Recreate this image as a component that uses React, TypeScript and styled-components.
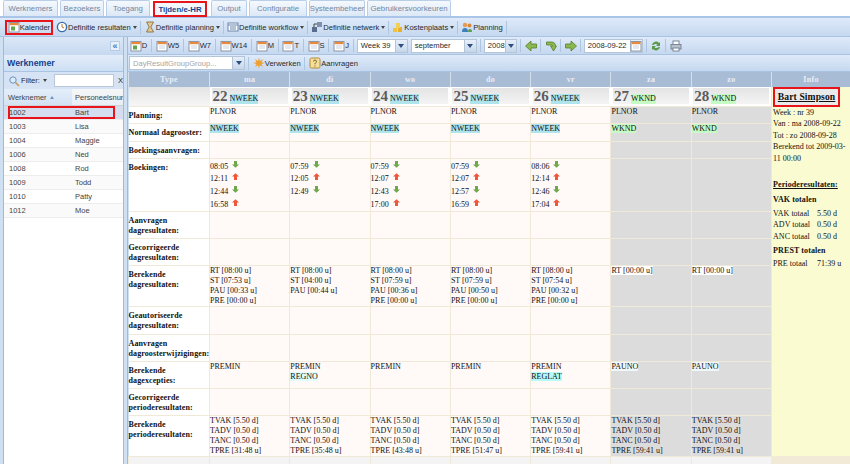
import React from 'react';
import styled, { createGlobalStyle } from 'styled-components';

const GlobalStyle = createGlobalStyle`
  html, body { margin: 0; padding: 0; background: #fff; overflow: hidden; }
  body { font-family: "Liberation Sans", Arial, sans-serif; font-size: 7.6px; color: #2a2a2a; }
  * { box-sizing: border-box; }
`;

const Page = styled.div`
  width: 850px;
  height: 464px;
  overflow: hidden;
  display: flex;
  flex-direction: column;
  background: #cfe0f3;
`;

const TabStrip = styled.div`
  height: 18px;
  flex: none;
  display: flex;
  gap: 2px;
  padding-left: 3px;
  background: #fff;
  border-bottom: 2px solid #a9c6e8;
`;

const Tab = styled.div<{ $active?: boolean; $w: number }>`
  width: ${p => p.$w}px;
  height: 16px;
  margin: ${p => (p.$active ? '1px 2px 0 1px' : '0')};
  display: flex;
  align-items: center;
  justify-content: center;
  white-space: nowrap;
  font-size: 7.8px;
  font-weight: ${p => (p.$active ? 700 : 400)};
  color: ${p => (p.$active ? '#15428b' : '#74879d')};
  background: ${p => (p.$active ? '#f2f7fd' : 'linear-gradient(#f5f9fe, #dce8f6)')};
  border: ${p => (p.$active ? '2px solid #e8141c' : '1px solid #b9cfe8')};
  border-bottom: ${p => (p.$active ? '2px solid #e8141c' : 'none')};
  border-radius: ${p => (p.$active ? '0' : '2px 2px 0 0')};
`;

const Toolbar = styled.div<{ $h: number; $pad: number; $gap: number }>`
  height: ${p => p.$h}px;
  flex: none;
  display: flex;
  align-items: center;
  gap: ${p => p.$gap}px;
  padding-left: ${p => p.$pad}px;
  background: linear-gradient(#dfeafa, #c5d8ef);
  border-bottom: 1px solid #a9c3e3;
  white-space: nowrap;
`;

const ToolButton = styled.div<{ $marked?: boolean }>`
  display: flex;
  align-items: center;
  height: 15px;
  padding: 0 0.75px;
  font-size: 7.6px;
  color: #2a2a2a;
  border: ${p => (p.$marked ? '2px solid #e8141c' : 'none')};
`;

const MainGroup = styled(ToolButton)`
  padding: 0 1px;
`;

const Caret = styled.span`
  width: 0;
  height: 0;
  margin-left: 2px;
  border: 2px solid transparent;
  border-top: 3px solid #444;
  border-bottom: none;
`;

const Sep = styled.span`
  width: 1px;
  height: 13px;
  background: #aec5e0;
  flex: none;
`;

const Body = styled.div`
  flex: 1;
  min-height: 0;
  display: flex;
`;

const Sidebar = styled.div`
  width: 121px;
  flex: none;
  display: flex;
  flex-direction: column;
  margin-left: 3px;
  border-left: 1px solid #99bbe8;
  border-right: 1px solid #99bbe8;
  background: #fff;
`;

const CollapseBar = styled.div`
  height: 18px;
  display: flex;
  align-items: center;
  justify-content: flex-end;
  padding-right: 3px;
  background: linear-gradient(#dbe7f7, #c6d9f0);
  color: #4a78b0;
  font-size: 9px;
  font-weight: 700;
`;

const CollapseButton = styled.span`
  width: 10px;
  height: 10px;
  display: flex;
  align-items: center;
  justify-content: center;
  background: #e8f0fa;
  border: 1px solid #b5cbe6;
  line-height: 1;
`;

const PanelTitle = styled.div`
  height: 17px;
  display: flex;
  align-items: center;
  padding-left: 3px;
  font-weight: 700;
  font-size: 8.8px;
  color: #15428b;
  background: linear-gradient(#e4edf9, #cddff4);
  border-bottom: 1px solid #a9c3e3;
`;

const FilterBar = styled.div`
  height: 17px;
  display: flex;
  align-items: center;
  gap: 1px;
  padding-left: 4px;
  font-size: 7.6px;
  background: #d5e3f5;
`;

const FilterInput = styled.span`
  width: 66px;
  height: 13px;
  margin: 0 3px 0 6px;
  background: #fff;
  border: 1px solid #b8c8da;
`;

const GridHead = styled.div`
  height: 17px;
  display: grid;
  grid-template-columns: 68px 1fr;
  font-size: 7.5px;
  color: #444;
  overflow: hidden;
  border-bottom: 1px solid #d0d0d0;
  background: linear-gradient(#f6f6f6, #e8eef6);
`;

const GridHeadCell = styled.div<{ $sorted?: boolean }>`
  display: flex;
  align-items: center;
  gap: 3px;
  padding-left: ${p => (p.$sorted ? 4 : 3)}px;
  white-space: nowrap;
  overflow: hidden;
  background: ${p => (p.$sorted ? 'linear-gradient(#e4eefa, #d3e2f4)' : 'transparent')};
`;

const SortArrow = styled.span`
  width: 0;
  height: 0;
  border: 2.5px solid transparent;
  border-bottom: 3px solid #6f94c4;
  border-top: none;
`;

const GridRow = styled.div<{ $selected?: boolean; $odd?: boolean }>`
  position: relative;
  height: 14px;
  display: grid;
  grid-template-columns: 66px 1fr;
  align-items: center;
  font-size: 7.5px;
  color: #444;
  padding-left: 5px;
  background: ${p => (p.$selected ? '#d4deee' : p.$odd ? '#fafafa' : '#fff')};
  border-bottom: 1px solid #ededed;
`;

const SelectionMark = styled.span`
  position: absolute;
  left: 4px;
  top: 0;
  width: 107px;
  height: 13px;
  border: 2px solid #e8141c;
`;

const Splitter = styled.div`
  width: 3px;
  flex: none;
  background: #cfe0f3;
`;

const Content = styled.div`
  flex: 1;
  min-width: 0;
  display: flex;
  flex-direction: column;
  border-left: 1px solid #99bbe8;
`;

const Combo = styled.div<{ $w: number; $grey?: boolean }>`
  width: ${p => p.$w}px;
  height: 14px;
  flex: none;
  display: flex;
  align-items: center;
  justify-content: space-between;
  padding-left: 3px;
  font-size: 7.6px;
  color: ${p => (p.$grey ? '#a5a5a5' : '#2a2a2a')};
  background: #fff;
  border: 1px solid #b5c5d8;
`;

const ComboArrow = styled.span`
  width: 12px;
  height: 100%;
  display: flex;
  align-items: center;
  justify-content: center;
  background: linear-gradient(#e7eff9, #c6d7ec);
  border-left: 1px solid #b5c5d8;
`;

const ComboCaret = styled.span`
  width: 0;
  height: 0;
  border: 3px solid transparent;
  border-top: 4px solid #2d4f7f;
  border-bottom: none;
`;

const Sheet = styled.table`
  flex: 1;
  width: 722px;
  table-layout: fixed;
  border-collapse: collapse;
  font-family: "Liberation Serif", "Times New Roman", serif;
  font-size: 8px;
  line-height: 10px;
  color: #111;
`;

const HeadCell = styled.th`
  height: 15px;
  padding: 0;
  font-size: 8px;
  letter-spacing: 0.3px;
  font-weight: 700;
  color: #e8eef6;
  background: #a9bcd6;
  border-left: 1px solid #d6e0ec;
  text-align: center;
`;

const DateCell = styled.td<{ $blank?: boolean }>`
  height: 19px;
  padding: 1px 2px;
  background: ${p => (p.$blank ? 'linear-gradient(#e4e4e4, #f6f6f6)' : '#fff')};
  border-bottom: 1px solid #f1e9d8;
`;

const DateBox = styled.div`
  height: 16px;
  display: flex;
  align-items: baseline;
  gap: 2px;
  padding: 3px 0 0 1px;
  background: linear-gradient(#e4e4e4, #f4f4f4);
`;

const DateNumber = styled.span`
  font-size: 15px;
  font-weight: 700;
  color: #5c5c5c;
`;

const TypeCell = styled.td`
  padding: 4px 0 0 0;
  vertical-align: top;
  font-weight: 700;
  white-space: nowrap;
  line-height: 10px;
  letter-spacing: 0.1px;
  background: #fff;
  border: 1px solid #f1e9d8;
  border-left: none;
`;

const DayCell = styled.td<{ $weekend?: boolean }>`
  padding: 0;
  vertical-align: top;
  background: ${p => (p.$weekend ? '#dcdcdc' : '#fff9f8')};
  border: 1px solid #f1e9d8;
`;

const Line = styled.div`
  height: 10px;
  white-space: nowrap;
`;

const Chip = styled.span<{ $color: string }>`
  background: ${p => p.$color};
`;

const ClockList = styled.div`
  padding-top: 2px;
`;

const ClockLine = styled.div`
  height: 12.6px;
  display: flex;
  align-items: center;
  gap: 4px;

  svg {
    margin-bottom: 5px;
  }
`;

const InfoCell = styled.td`
  padding: 0 1px;
  vertical-align: top;
  background: #fbfbd2;
  border-left: 1px solid #f1e9d8;
  line-height: 11.4px;
  font-size: 8px;
`;

const InfoName = styled.div`
  width: 67px;
  height: 20px;
  display: flex;
  align-items: center;
  justify-content: center;
  font-size: 9.6px;
  font-weight: 700;
  letter-spacing: 0.1px;
  white-space: nowrap;
  text-decoration: underline;
  color: #111;
  background: #eaeaea;
  border: 2px solid #e8141c;
`;

const InfoHeading = styled.div<{ $gap: number; $under?: boolean }>`
  margin-top: ${p => p.$gap}px;
  margin-bottom: 2px;
  font-weight: 700;
  letter-spacing: 0.1px;
  text-decoration: ${p => (p.$under ? 'underline' : 'none')};
`;

const InfoTotals = styled.div`
  display: grid;
  grid-template-columns: 44px 1fr;
`;

const FootCell = styled.td<{ $info?: boolean }>`
  height: 9px;
  padding: 0;
  background: ${p => (p.$info ? '#f2ead6' : '#f4f4f4')};
  border-left: 1px solid #f1e9d8;
`;

const Ico = ({ children, w = 12 }: { children: React.ReactNode; w?: number }) => (
  <svg width={w} height={12} viewBox="0 0 12 12" style={{ flex: 'none' }}>{children}</svg>
);

const CalendarIcon = ({ green }: { green?: boolean }) => (
  <Ico>
    <rect x="1" y="1.5" width="10" height="9.5" fill="#fff" stroke="#8b96a8" />
    <rect x="1.5" y="2" width="9" height="2.2" fill="#e88a3c" />
    {green && <rect x="3" y="5.5" width="4" height="4" fill="#5ea84a" />}
    {!green && <path d="M3 6h6M3 8h6" stroke="#c9d3e0" />}
  </Ico>
);

const ArrowUp = () => (
  <svg width="7" height="7" viewBox="0 0 7 7">
    <path d="M3.5 0.3 7 3.6H5V7H2V3.6H0z" fill="#f0563a" />
  </svg>
);

const ArrowDown = () => (
  <svg width="7" height="7" viewBox="0 0 7 7">
    <path d="M3.5 6.7 7 3.4H5V0H2v3.4H0z" fill="#6fa84a" />
  </svg>
);

const GreenArrow = ({ flip }: { flip?: boolean }) => (
  <Ico w={13}>
    <path
      d={flip ? 'M12 6 6.5 1v3H1v4h5.5v3z' : 'M1 6 6.5 1v3H12v4H6.5v3z'}
      fill="#8ab84e"
      stroke="#557f2c"
      strokeWidth="0.8"
    />
  </Ico>
);

const tabs: [string, number, boolean?][] = [
  ['Werknemers', 55],
  ['Bezoekers', 44],
  ['Toegang', 44],
  ['Tijden/e-HR', 54, true],
  ['Output', 36],
  ['Configuratie', 58],
  ['Systeembeheer', 56],
  ['Gebruikersvoorkeuren', 84],
];

const people = [
  ['1002', 'Bart'], ['1003', 'Lisa'], ['1004', 'Maggie'], ['1006', 'Ned'],
  ['1008', 'Rod'], ['1009', 'Todd'], ['1010', 'Patty'], ['1012', 'Moe'],
];

type Day = {
  name: string; nr: number; code: string; clock: [string, boolean][];
  result: string[]; exc: string[]; period: string;
};

const mkClock = (t: string[]): [string, boolean][] => t.map((x, i) => [x, i % 2 === 1]);

const days: Day[] = [
  { name: 'ma', nr: 22, code: 'NWEEK', clock: mkClock(['08:05', '12:11', '12:44', '16:58']), result: ['RT [08:00 u]', 'ST [07:53 u]', 'PAU [00:33 u]', 'PRE [00:00 u]'], exc: ['PREMIN'], period: '31:48' },
  { name: 'di', nr: 23, code: 'NWEEK', clock: mkClock(['07:59', '12:05', '12:49']), result: ['RT [08:00 u]', 'ST [04:00 u]', 'PAU [00:44 u]'], exc: ['PREMIN', 'REGNO'], period: '35:48' },
  { name: 'wo', nr: 24, code: 'NWEEK', clock: mkClock(['07:59', '12:07', '12:43', '17:00']), result: ['RT [08:00 u]', 'ST [07:59 u]', 'PAU [00:36 u]', 'PRE [00:00 u]'], exc: ['PREMIN'], period: '43:48' },
  { name: 'do', nr: 25, code: 'NWEEK', clock: mkClock(['07:59', '12:07', '12:57', '16:59']), result: ['RT [08:00 u]', 'ST [07:59 u]', 'PAU [00:50 u]', 'PRE [00:00 u]'], exc: ['PREMIN'], period: '51:47' },
  { name: 'vr', nr: 26, code: 'NWEEK', clock: mkClock(['08:06', '12:14', '12:46', '17:04']), result: ['RT [08:00 u]', 'ST [07:54 u]', 'PAU [00:32 u]', 'PRE [00:00 u]'], exc: ['PREMIN', 'REGLAT'], period: '59:41' },
  { name: 'za', nr: 27, code: 'WKND', clock: [], result: ['RT [00:00 u]'], exc: ['PAUNO'], period: '59:41' },
  { name: 'zo', nr: 28, code: 'WKND', clock: [], result: ['RT [00:00 u]'], exc: ['PAUNO'], period: '59:41' },
];

const isWeekend = (d: Day) => d.code === 'WKND';
const chipColor = (c: string) => (c === 'WKND' ? '#c6fbc6' : '#b0e4ec');

const excColor = (c: string) => {
  if (c === 'REGLAT') return '#b6fbfb';
  if (c === 'REGNO') return '#e2fbfb';
  if (c === 'PAUNO') return '#eef8fb';
  return 'transparent';
};

type RowDef = { label: string[]; h: number; cell?: (d: Day) => React.ReactNode };

const rows: RowDef[] = [
  { label: ['Planning:'], h: 17, cell: () => <Line>PLNOR</Line> },
  { label: ['Normaal dagrooster:'], h: 18, cell: d => <Line><Chip $color={chipColor(d.code)}>{d.code}</Chip></Line> },
  { label: ['Boekingsaanvragen:'], h: 17 },
  {
    label: ['Boekingen:'], h: 52,
    cell: d => (
      <ClockList>
        {d.clock.map(([t, out]) => (
          <ClockLine key={t}>{t}{out ? <ArrowUp /> : <ArrowDown />}</ClockLine>
        ))}
      </ClockList>
    ),
  },
  { label: ['Aanvragen', 'dagresultaten:'], h: 27 },
  { label: ['Gecorrigeerde', 'dagresultaten:'], h: 27 },
  {
    label: ['Berekende', 'dagresultaten:'], h: 41,
    cell: d => d.result.map(r => (
      <Line key={r}>{isWeekend(d) ? <Chip $color="#fff">{r}</Chip> : r}</Line>
    )),
  },
  { label: ['Geautoriseerde', 'dagresultaten:'], h: 28 },
  { label: ['Aanvragen', 'dagroosterwijzigingen:'], h: 27 },
  {
    label: ['Berekende', 'dagexcepties:'], h: 27,
    cell: d => d.exc.map(e => <Line key={e}><Chip $color={excColor(e)}>{e}</Chip></Line>),
  },
  { label: ['Gecorrigeerde', 'perioderesultaten:'], h: 27 },
  {
    label: ['Berekende', 'perioderesultaten:'], h: 41,
    cell: d => (
      <>
        <Line>TVAK [5.50 d]</Line>
        <Line>TADV [0.50 d]</Line>
        <Line>TANC [0.50 d]</Line>
        <Line>TPRE [{d.period} u]</Line>
      </>
    ),
  },
];

const viewButtons = ['W5', 'W7', 'W14', 'M', 'T', 'S', 'J'];

const App = () => (
  <Page>
    <GlobalStyle />
    <TabStrip>
      {tabs.map(([t, w, active]) => <Tab key={t} $w={w} $active={active}>{t}</Tab>)}
    </TabStrip>

    <Toolbar $h={19} $pad={5} $gap={2}>
      <ToolButton $marked><CalendarIcon green />Kalender</ToolButton>
      <MainGroup>
        <Ico><circle cx="6" cy="6" r="4.6" fill="#fff" stroke="#3a6ea8" strokeWidth="1.4" /><path d="M6 3v3l2 1" stroke="#c0722a" fill="none" /></Ico>
        Definitie resultaten<Caret />
      </MainGroup>
      <Sep />
      <MainGroup>
        <Ico><path d="M2.5 1h7L6.8 6l2.700 5h-7l2.700-5z" fill="#e7c98f" stroke="#8c7a55" /></Ico>
        Definitie planning<Caret />
      </MainGroup>
      <Sep />
      <MainGroup>
        <Ico><rect x="1" y="2" width="10" height="8" fill="#fff" stroke="#6a86ad" /><path d="M1 4h10M3 6h6M3 8h6" stroke="#6a86ad" /></Ico>
        Definitie workflow<Caret />
      </MainGroup>
      <Sep />
      <MainGroup>
        <Ico><rect x="1" y="6" width="5" height="5" fill="#5a6d8c" /><rect x="6" y="1" width="5" height="5" fill="#7d90ad" /><path d="M3 6V3h3" stroke="#444" fill="none" /></Ico>
        Definitie netwerk<Caret />
      </MainGroup>
      <Sep />
      <MainGroup>
        <Ico><rect x="1" y="7" width="4" height="4" fill="#f0c040" /><rect x="6" y="6" width="4" height="5" fill="#e8b030" /><rect x="4" y="2" width="4" height="5" fill="#f4d050" /></Ico>
        Kostenplaats<Caret />
      </MainGroup>
      <Sep />
      <MainGroup>
        <Ico><circle cx="4" cy="4" r="2.2" fill="#e89a50" /><circle cx="8.5" cy="4.5" r="2" fill="#d88a40" /><path d="M1 11c0-3 1-4 3-4s3 1 3 4z" fill="#3f7fc0" /><path d="M7 11c0-2 .5-3 2-3s2 1 2 3z" fill="#5aa050" /></Ico>
        Planning
      </MainGroup>
      <Sep />
    </Toolbar>

    <Body>
      <Sidebar>
        <CollapseBar><CollapseButton>«</CollapseButton></CollapseBar>
        <PanelTitle>Werknemer</PanelTitle>
        <FilterBar>
          <Ico><circle cx="5" cy="5" r="3.2" fill="#dcebf8" stroke="#6b94c0" /><path d="M7.5 7.5 11 11" stroke="#c49a5a" strokeWidth="1.6" /></Ico>
          Filter:<Caret />
          <FilterInput />
          <span>X</span>
        </FilterBar>
        <GridHead>
          <GridHeadCell $sorted>Werknemer<SortArrow /></GridHeadCell>
          <GridHeadCell>Personeelsnun</GridHeadCell>
        </GridHead>
        {people.map(([nr, name], i) => (
          <GridRow key={nr} $selected={i === 0} $odd={i % 2 === 1}>
            <span>{nr}</span>
            <span>{name}</span>
            {i === 0 && <SelectionMark />}
          </GridRow>
        ))}
      </Sidebar>
      <Splitter />
      <Content>
        <Toolbar $h={18} $pad={1} $gap={3}>
          <ToolButton><CalendarIcon green />D</ToolButton>
          <Sep />
          {viewButtons.map(v => (
            <React.Fragment key={v}>
              <ToolButton><CalendarIcon />{v}</ToolButton>
              <Sep />
            </React.Fragment>
          ))}
          <Combo $w={51}>Week 39<ComboArrow><ComboCaret /></ComboArrow></Combo>
          <Combo $w={66}>september<ComboArrow><ComboCaret /></ComboArrow></Combo>
          <Sep />
          <Combo $w={33}>2008<ComboArrow><ComboCaret /></ComboArrow></Combo>
          <Sep />
          <GreenArrow />
          <Sep />
          <Ico w={13}><path d="M2 2h5c3 0 4 2 4 4l1 0-3 5-3-5h2c0-1-1-1-2-1H2z" fill="#8ab84e" stroke="#557f2c" strokeWidth="0.8" /></Ico>
          <Sep />
          <GreenArrow flip />
          <Sep />
          <Combo $w={59}>2008-09-22<ComboArrow><CalendarIcon /></ComboArrow></Combo>
          <Sep />
          <Ico><path d="M2 5a4 4 0 0 1 7-2l1-1v4H6l1.500-1.200A2.500 2.500 0 0 0 3.500 5zM10 7a4 4 0 0 1-7 2l-1 1V6h4L4.500 7.200A2.500 2.500 0 0 0 8.500 7z" fill="#5a9a4a" /></Ico>
          <Sep />
          <Ico w={14}><rect x="3" y="1" width="6" height="4" fill="#fff" stroke="#7a8698" /><rect x="1" y="4.500" width="10" height="4.500" fill="#b7c0cc" stroke="#7a8698" /><rect x="3" y="8" width="6" height="3" fill="#fff" stroke="#7a8698" /></Ico>
        </Toolbar>
        <Toolbar $h={17} $pad={1} $gap={3}>
          <Combo $w={116} $grey>DayResultGroupGroup...<ComboArrow><ComboCaret /></ComboArrow></Combo>
          <Sep />
          <ToolButton>
            <Ico><path d="M6 0.500 7 4l3-2-1.500 3.200L12 6 8.500 7l1.500 3-3-1.800L6 11.500 5 8.200 2 10l1.500-3L0 6l3.500-.800L2 2l3 2z" fill="#f0a030" /></Ico>
            Verwerken
          </ToolButton>
          <Sep />
          <ToolButton>
            <Ico><rect x="1" y="1" width="10" height="10" rx="1.500" fill="#f6df9a" stroke="#b08a3a" /><path d="M4.500 4.500a1.500 1.500 0 1 1 2 1.500c-.5.2-.5.6-.5 1.300M6 8.500v1" stroke="#7a5a20" fill="none" /></Ico>
            Aanvragen
          </ToolButton>
        </Toolbar>
        <Sheet>
          <colgroup>
            <col style={{ width: 81 }} />
            {days.map(d => <col key={d.nr} style={{ width: 80.300 }} />)}
            <col />
          </colgroup>
          <thead>
            <tr>
              <HeadCell>Type</HeadCell>
              {days.map(d => <HeadCell key={d.nr}>{d.name}</HeadCell>)}
              <HeadCell>Info</HeadCell>
            </tr>
          </thead>
          <tbody>
            <tr>
              <DateCell $blank />
              {days.map(d => (
                <DateCell key={d.nr}>
                  <DateBox>
                    <DateNumber>{d.nr}</DateNumber>
                    <Chip $color={chipColor(d.code)}>{d.code}</Chip>
                  </DateBox>
                </DateCell>
              ))}
              <InfoCell rowSpan={rows.length + 1}>
                <InfoName>Bart Simpson</InfoName>
                <div>Week : nr 39</div>
                <div>Van : ma 2008-09-22</div>
                <div>Tot : zo 2008-09-28</div>
                <div>Berekend tot 2009-03-11 00:00</div>
                <InfoHeading $gap={15} $under>Perioderesultaten:</InfoHeading>
                <InfoHeading $gap={4}>VAK totalen</InfoHeading>
                <InfoTotals>
                  <span>VAK totaal</span><span>5.50 d</span>
                  <span>ADV totaal</span><span>0.50 d</span>
                  <span>ANC totaal</span><span>0.50 d</span>
                </InfoTotals>
                <InfoHeading $gap={3}>PREST totalen</InfoHeading>
                <InfoTotals>
                  <span>PRE totaal</span><span>71:39 u</span>
                </InfoTotals>
              </InfoCell>
            </tr>
            {rows.map(r => (
              <tr key={r.label.join()} style={{ height: r.h }}>
                <TypeCell>{r.label.map(l => <div key={l}>{l}</div>)}</TypeCell>
                {days.map(d => (
                  <DayCell key={d.nr} $weekend={isWeekend(d)}>{r.cell?.(d)}</DayCell>
                ))}
              </tr>
            ))}
            <tr>
              <FootCell />
              {days.map(d => <FootCell key={d.nr} />)}
              <FootCell $info />
            </tr>
          </tbody>
        </Sheet>
      </Content>
    </Body>
  </Page>
);

export default App;
